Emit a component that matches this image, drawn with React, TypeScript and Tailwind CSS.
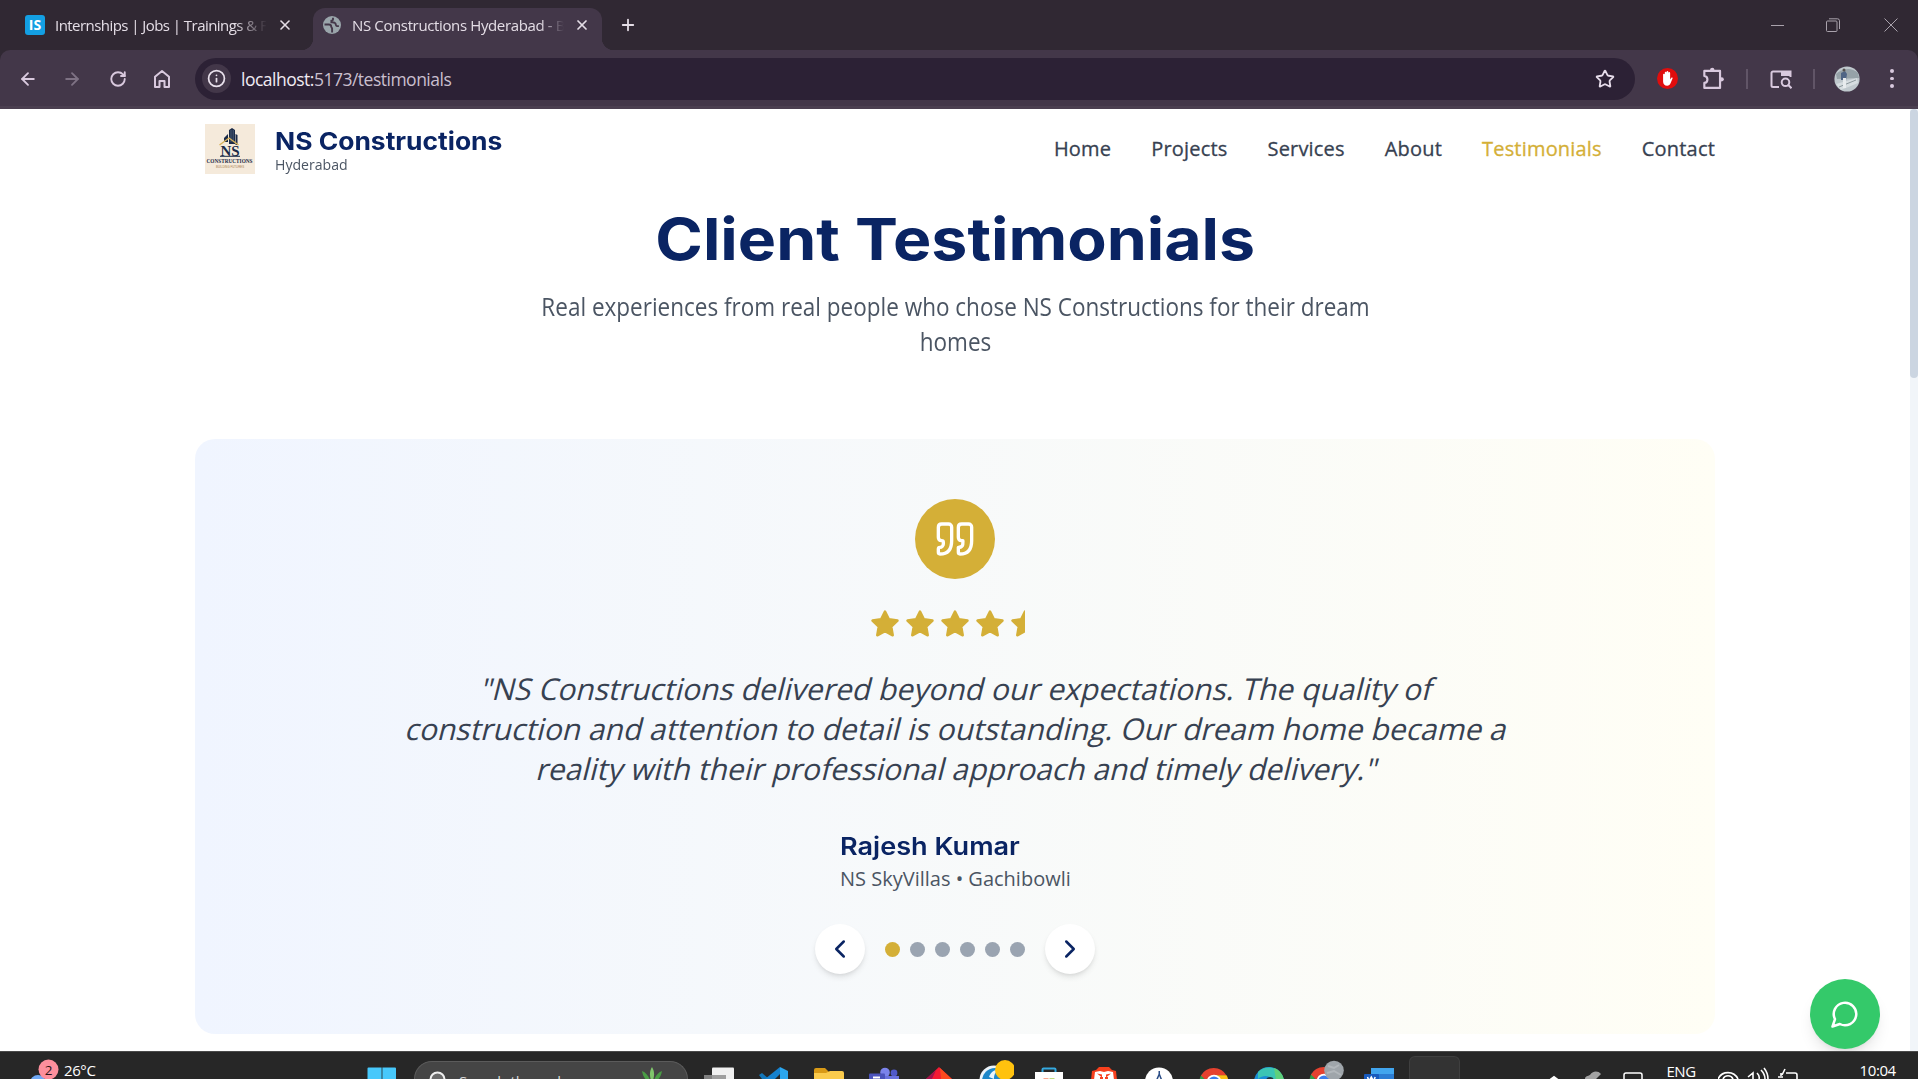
import { type ReactNode } from 'react';
import { ArrowLeft, ArrowRight, RotateCw, Info, X, Plus, Star, ChevronLeft, ChevronRight } from 'lucide-react';

const NAV = ['Home', 'Projects', 'Services', 'About', 'Testimonials', 'Contact'];

const QUOTE = [
  '"NS Constructions delivered beyond our expectations. The quality of',
  'construction and attention to detail is outstanding. Our dream home became a',
  'reality with their professional approach and timely delivery."',
];

const STAR =
  'M12 2l3.090 6.260L22 9.270l-5 4.870 1.180 6.880L12 17.770l-6.180 3.250L7 14.140 2 9.270l6.910-1.010z';

function TabStrip() {
  return (
    <div className="flex h-[50px] shrink-0 items-center bg-[#302833] text-[15px] text-[#e4dde6]">
      <div className="flex h-full w-[313px] shrink-0 items-center pl-[25px]">
        <div className="flex h-5 w-5 shrink-0 items-center justify-center rounded-[3px] bg-[#139fe3] text-[14px] font-bold leading-none text-white">
          IS
        </div>
        <div className="ml-[10px] w-[211px] overflow-hidden whitespace-nowrap [mask-image:linear-gradient(to_right,black_180px,transparent_212px)]">
          <span className="tracking-[-0.55px]">Internships | Jobs | Trainings &amp; F</span>
        </div>
        <X className="ml-[11px] h-4 w-4" strokeWidth={2.4} />
      </div>
      <div className="relative flex h-[42px] w-[289px] shrink-0 items-center self-end rounded-t-[12px] bg-[#433749] pb-2 pl-[10px]">
        <div className="absolute -left-3 bottom-0 h-3 w-3 bg-[radial-gradient(circle_at_0_0,#302833_12px,#433749_12.5px)]" />
        <div className="absolute -right-3 bottom-0 h-3 w-3 bg-[radial-gradient(circle_at_100%_0,#302833_12px,#433749_12.5px)]" />
        <svg viewBox="0 0 18 18" className="h-[18px] w-[18px] shrink-0">
          <circle cx="9" cy="9" r="9" fill="#9aa5ab" />
          <path d="M1.500 8.500h4.300c1.500 0 2.400.9 2.400 2.100 0 .9.9 1 .9 1.900v4M10 1.800v1.700c0 1-.8 1.200-1.600 1.300v1.500c1.500 0 3.400-.2 4 1 .5 1 .2 2.600 1.500 2.800h2" fill="none" stroke="#433749" strokeWidth="1.900" />
        </svg>
        <div className="ml-[11px] w-[212px] overflow-hidden whitespace-nowrap [mask-image:linear-gradient(to_right,black_188px,transparent_212px)]">
          <span className="tracking-[-0.37px]">NS Constructions Hyderabad - B</span>
        </div>
        <X className="ml-[10px] h-4 w-4" strokeWidth={2.6} />
      </div>
      <Plus className="ml-[17px] h-[18px] w-[18px]" strokeWidth={2.4} />
      <div className="ml-auto flex items-center pr-[20px] text-[#a9a2ac]">
        <div className="mr-[42px] h-px w-[13px] bg-[#a9a2ac]" />
        <svg viewBox="0 0 14 14" className="mr-[44px] h-[14px] w-[14px]" fill="none" stroke="currentColor">
          <rect x=".5" y="3" width="10.5" height="10.5" rx="1" />
          <path d="M3 .8h8.500a2 2 0 0 1 2 2V11" />
        </svg>
        <svg viewBox="0 0 14 14" className="h-[14px] w-[14px]" stroke="currentColor">
          <path d="M.5.5l13 13M13.500.5l-13 13" />
        </svg>
      </div>
    </div>
  );
}

function Toolbar() {
  return (
    <div className="bg-[#302833]">
      <div className="flex h-[59px] items-center rounded-t-[10px] border-b-[3px] border-[#4b3f50] bg-[#433749] pt-px text-[#d9c9de]">
        <div className="flex w-[195px] shrink-0 items-center gap-[24px] pl-[18px]">
          <ArrowLeft className="h-[20px] w-[20px]" strokeWidth={2.2} />
          <ArrowRight className="h-[20px] w-[20px] text-[#7e7284]" strokeWidth={2.2} />
          <RotateCw className="ml-[3px] h-[18px] w-[18px]" strokeWidth={2.5} />
          <svg viewBox="0 0 18 20" className="ml-[2px] h-[20px] w-[18px]" fill="none" stroke="currentColor" strokeWidth="2">
            <path d="M2 7.800L9 2l7 5.800V18h-4.500v-6h-5v6H2z" strokeLinejoin="round" />
          </svg>
        </div>
        <div className="flex h-[42px] w-[1440px] shrink-0 items-center rounded-full bg-[#2c2135] pl-[7px] pr-[20px]">
          <div className="flex h-[29px] w-[29px] items-center justify-center rounded-full bg-[#433749] text-[#e9e1ec]">
            <Info className="h-[19px] w-[19px]" strokeWidth={2.2} />
          </div>
          <div className="ml-[10px] pt-[2px] text-[17.5px] tracking-[-0.5px] text-[#c9bfce]">
            <span className="text-[#f1ebf3]">localhost:</span>5173/testimonials
          </div>
          <Star className="ml-auto h-[20px] w-[20px] text-[#e6dcea]" strokeWidth={2.2} strokeLinejoin="miter" />
        </div>
        <svg viewBox="0 0 20 20" className="ml-[22px] h-[21px] w-[21px]">
          <circle cx="10" cy="10" r="10" fill="#e00d0d" />
          <path d="M5.800 9.500V6.200a.8.8 0 0 1 1.600 0V4.500a.8.8 0 0 1 1.700 0V3.800a.8.8 0 0 1 1.700 0v.9a.8.8 0 0 1 1.700 0v6.200l1-1.400c.6-.8 1.700-.4 1.300.6l-1.900 4.500c-.6 1.400-1.500 2.200-3.200 2.200-2.500 0-3.900-1.400-3.900-4z" fill="#fff" />
        </svg>
        <svg viewBox="0 0 24 24" className="ml-[22px] h-[26px] w-[26px]" fill="none" stroke="currentColor" strokeWidth="2">
          <path d="M4 4.500h14.500v15.700H4v-4.600c3.800-.3 3.800-6.100 0-6.400z" strokeLinejoin="round" />
          <circle cx="11.300" cy="3.500" r="2" fill="currentColor" stroke="none" />
          <circle cx="20" cy="12.300" r="2" fill="currentColor" stroke="none" />
        </svg>
        <div className="ml-[20px] h-[20px] w-[2px] bg-[#615567]" />
        <svg viewBox="0 0 22 20" className="ml-[22px] h-[20px] w-[22px]" fill="none" stroke="currentColor" strokeWidth="2">
          <path d="M9 18H3a1.500 1.500 0 0 1-1.500-1.500V4A1.500 1.500 0 0 1 3 2.500h17.500V8" />
          <path d="M11 2h10v5H11z" fill="currentColor" stroke="none" />
          <circle cx="15.500" cy="13.300" r="3.800" />
          <path d="M18.300 16l3.200 3.200" />
        </svg>
        <div className="ml-[21px] h-[20px] w-[2px] bg-[#615567]" />
        <svg viewBox="0 0 26 26" className="ml-[19px] h-[26px] w-[26px]">
          <circle cx="13" cy="13" r="12.600" fill="#bfc8cd" />
          <path d="M2 8c5-5 15-8 22-1l1 5-22 1z" fill="#96a2a8" />
          <path d="M2 18l21-6 1 5-17 7z" fill="#d6dde0" />
          <path d="M5 21l17-7" stroke="#8b979c" />
          <path d="M7 7l4-2 2 3-1 6H7z" fill="#4f6585" />
          <path d="M9 12h3v10H9z" fill="#e8ecee" />
          <circle cx="10" cy="4" r="1.500" fill="#54504c" />
        </svg>
        <div className="ml-[30px] flex flex-col gap-[4px]">
          <div className="h-[3.5px] w-[3.5px] rounded-full bg-current" />
          <div className="h-[3.5px] w-[3.5px] rounded-full bg-current" />
          <div className="h-[3.5px] w-[3.5px] rounded-full bg-current" />
        </div>
      </div>
    </div>
  );
}

function Logo() {
  return (
    <svg viewBox="0 0 50 50" className="h-[50px] w-[50px]">
      <rect width="50" height="50" fill="#f5eadb" />
      <path d="M19 14l4-4v8h-4zM24 6l3-2 3 2v14h-6zM30.500 10l2 1v10h-2z" fill="#1b2b48" />
      <path d="M26 6v12M28.200 6v12" stroke="#6e7f99" strokeWidth=".6" />
      <path d="M14.500 21l9.500-7 9.500 7" fill="none" stroke="#d8b25a" strokeWidth="1.400" />
      <text x="25" y="31.500" textAnchor="middle" fontFamily="Liberation Serif" fontWeight="700" fontSize="15" fill="#1b2b48">NS</text>
      <path d="M15 32.300h20" stroke="#1b2b48" strokeWidth="1" />
      <text x="24.500" y="39.300" textAnchor="middle" fontFamily="Liberation Serif" fontWeight="700" fontSize="6" textLength="46" lengthAdjust="spacingAndGlyphs" fill="#1b2b48">CONSTRUCTIONS</text>
      <text x="25" y="43.500" textAnchor="middle" fontFamily="Liberation Sans" fontSize="2.800" textLength="28" fill="#a4794a">BUILDING FUTURES</text>
    </svg>
  );
}

function Page() {
  return (
    <div className="flex h-[942px] shrink-0 overflow-hidden bg-white">
      <div className="relative flex w-[1910px] shrink-0 flex-col px-[195px]">
        <header className="flex h-[80px] items-center justify-between pl-[10px]">
          <div className="flex items-center gap-[20px]">
            <Logo />
            <div className="pt-[3px]">
              <div className="font-['Inter'] text-[24.5px] font-bold leading-[28px] text-[#0a2463]">
                <span className="inline-block origin-left scale-x-[1.078]">NS Constructions</span>
              </div>
              <div className="-mt-px origin-left scale-x-[0.94] text-[15px] leading-[20px] text-[#4b5563]">Hyderabad</div>
            </div>
          </div>
          <nav className="flex gap-[40px] text-[20px] tracking-[0.19px] text-[#374151] [-webkit-text-stroke:0.3px_currentColor]">
            {NAV.map((n) => (
              <a key={n} className={n === 'Testimonials' ? 'text-[#d4af37]' : ''}>{n}</a>
            ))}
          </nav>
        </header>
        <section className="flex flex-col items-center pt-[20px] text-center">
          <h1 className="scale-x-[1.11] font-['Inter'] text-[58px] font-bold leading-[60px] text-[#0a2463]">Client Testimonials</h1>
          <p className="mt-[20px] w-[933px] scale-x-[0.9] text-[25px] leading-[35px] text-[#4b5563]">
            Real experiences from real people who chose NS Constructions for their dream homes
          </p>
        </section>
        <section className="mt-[80px] flex h-[595px] shrink-0 flex-col items-center rounded-[20px] bg-linear-to-r from-[#f0f5ff] to-[#fffef5] pt-[60px]">
          <div className="flex h-[80px] w-[80px] items-center justify-center rounded-full bg-[#d4af37]">
            <svg viewBox="0 0 24 24" className="h-[40px] w-[40px] text-white" fill="none" stroke="currentColor" strokeWidth="2" strokeLinecap="round" strokeLinejoin="round">
              <path d="M3 21c3 0 7-1 7-8V5c0-1.250-.756-2.017-2-2H4c-1.250 0-2 .75-2 1.972V11c0 1.250.75 2 2 2 1 0 1 0 1 1v1c0 1-1 2-2 2s-1 .008-1 1.031V20c0 1 0 1 1 1z" />
              <path d="M15 21c3 0 7-1 7-8V5c0-1.250-.757-2.017-2-2h-4c-1.250 0-2 .75-2 1.972V11c0 1.250.75 2 2 2h.75c0 2.250.25 4-2.750 4v3c0 1 0 1 1 1z" />
            </svg>
          </div>
          <div className="mt-[30px] flex gap-[5px]">
            {[24, 24, 24, 24, 12].map((w, i) => (
              <svg key={i} viewBox="0 0 24 24" className="h-[30px] w-[30px] text-[#d4af37]">
                <svg width={w} height="24" viewBox={`0 0 ${w} 24`}>
                  <path d={STAR} fill="currentColor" stroke="currentColor" strokeWidth="2" strokeLinejoin="round" />
                </svg>
              </svg>
            ))}
          </div>
          <blockquote className="mt-[30px] flex flex-col items-center whitespace-nowrap text-[30px] leading-[40px] text-[#374151]">
            {QUOTE.map((line) => (
              <span key={line} className="origin-[50%_78%] -skew-x-[14deg]">{line}</span>
            ))}
          </blockquote>
          <div className="mt-[40px] w-[230px] whitespace-nowrap">
            <div className="font-['Inter'] text-[24.5px] font-semibold leading-[35px] text-[#0a2463]">
              <span className="inline-block origin-left scale-x-[1.105]">Rajesh Kumar</span>
            </div>
            <div className="text-[20px] leading-[30px] text-[#4b5563]">NS SkyVillas • Gachibowli</div>
          </div>
          <div className="mt-[30px] flex items-center gap-[20px] text-[#0a2463]">
            <button className="flex h-[50px] w-[50px] items-center justify-center rounded-full bg-white shadow-md">
              <ChevronLeft className="h-[30px] w-[30px]" />
            </button>
            <div className="flex gap-[10px]">
              {[0, 1, 2, 3, 4, 5].map((i) => (
                <div key={i} className={i === 0 ? 'h-[15px] w-[15px] rounded-full bg-[#d4af37]' : 'h-[15px] w-[15px] rounded-full bg-[#9aa4b1]'} />
              ))}
            </div>
            <button className="flex h-[50px] w-[50px] items-center justify-center rounded-full bg-white shadow-md">
              <ChevronRight className="h-[30px] w-[30px]" />
            </button>
          </div>
        </section>
        <div className="absolute bottom-[2px] right-[30px] flex h-[70px] w-[70px] items-center justify-center rounded-full bg-[#34c96a] text-white shadow-lg">
          <svg viewBox="0 0 24 24" className="h-[30px] w-[30px]" fill="none" stroke="currentColor" strokeWidth="2" strokeLinecap="round" strokeLinejoin="round">
            <path d="M7.900 20A9 9 0 1 0 4 16.100L2 22Z" />
          </svg>
        </div>
      </div>
      <div className="w-2 bg-[#f1f5f9]">
        <div className="h-[269px] rounded-full bg-[#cbd5e1]" />
      </div>
    </div>
  );
}

function Slot({ children }: { children?: ReactNode }) {
  return (
    <div className="flex h-[12px] w-[55px] shrink-0 items-start justify-center overflow-hidden">{children}</div>
  );
}

function Chrome({ avatar }: { avatar?: boolean }) {
  return (
    <svg viewBox="0 0 40 19" className="h-[19px] w-[40px]">
      <path d="M5.500 21a14.500 14.500 0 0 1 2-7.500L15 24z" fill="#2f9e4b" />
      <path d="M7 14.500a14.500 14.500 0 0 1 25.500 0H20l-7 6z" fill="#e5412f" />
      <path d="M20 14.300h12.500a14 14 0 0 1 2 6H25z" fill="#fbc116" />
      <circle cx="20" cy="21" r="7.300" fill="#fff" />
      <circle cx="20" cy="21" r="5.600" fill="#3b7ded" />
      {avatar && (
        <g>
          <circle cx="30" cy="10.500" r="9.800" fill="#9fa5aa" />
          <path d="M24 6l6 2 5-3M23 13l7-2 7 4" stroke="#b2b7bb" strokeWidth="2" fill="none" />
        </g>
      )}
    </svg>
  );
}

function Taskbar() {
  return (
    <div className="flex h-[28px] shrink-0 items-end overflow-hidden border-t border-[#4a4a4a] bg-[#272727] text-[15px] text-white">
      <div className="flex w-[354px] shrink-0 items-end">
        <svg viewBox="0 0 64 27" className="h-[27px] w-[64px]">
          <circle cx="38" cy="31" r="8" fill="#6fa8f5" />
          <circle cx="48.500" cy="17.500" r="10" fill="#fd8f9c" />
          <text x="48.500" y="22.500" textAnchor="middle" fontFamily="Open Sans" fontSize="13.500" fill="#2a1416">2</text>
        </svg>
        <span className="h-[19px] leading-[20px] tracking-[-0.4px]">26°C</span>
      </div>
      <Slot>
        <svg viewBox="0 0 30 12" className="h-[12px] w-[30px]">
          <path d="M.5 1.500a1 1 0 0 1 1-1H14.600V12H.5zM15.400.5H28a1 1 0 0 1 1 1V12H15.400z" fill="#47c8fb" />
        </svg>
      </Slot>
      <div className="ml-[5px] mr-[3.5px] flex h-[18px] w-[274px] shrink-0 items-start overflow-hidden rounded-t-[18px] border border-b-0 border-[#5b5b5b] bg-[#454545] pl-[14px] pt-[9px]">
        <svg viewBox="0 0 18 18" className="h-[18px] w-[18px] shrink-0" fill="#6a6a6a" stroke="#eee" strokeWidth="2">
          <circle cx="8.500" cy="8.500" r="7" />
        </svg>
        <span className="ml-[12px] whitespace-nowrap leading-[20px] text-[#d5d5d5]">Search the web</span>
        <svg viewBox="0 0 26 16" className="-mt-[4px] ml-auto mr-[22px] h-[16px] w-[26px] shrink-0">
          <path d="M13 0c3 5 2.500 10 0 16-2.500-6-3-11 0-16z" fill="#7fc66b" />
          <path d="M3 4c5 2 7 6 9 12C7 14 4 10 3 4zM23 4c-5 2-7 6-9 12 5-2 8-6 9-12z" fill="#4a9c45" />
          <path d="M0 14c5-2 9-1 12 3zM26 14c-5-2-9-1-12 3z" fill="#3a8a3a" />
        </svg>
      </div>
      <Slot>
        <svg viewBox="0 0 30 12" className="h-[12px] w-[30px]">
          <rect x="8" y=".5" width="22" height="16" rx="1" fill="#f0f0f0" />
          <path d="M0 8h22v8H0z" fill="#8f8f8f" opacity=".85" />
        </svg>
      </Slot>
      <Slot>
        <svg viewBox="0 0 30 12" className="h-[12px] w-[30px]">
          <path d="M0 8l3-2 7 6H3z" fill="#1376b9" />
          <path d="M6 12L21 0v12z" fill="#1682cf" />
          <path d="M21 0l8 4v10h-8z" fill="#2ba6ee" />
          <path d="M16 12l5-5v5z" fill="#272727" />
        </svg>
      </Slot>
      <Slot>
        <svg viewBox="0 0 30 12" className="h-[12px] w-[30px]">
          <path d="M0 3a2 2 0 0 1 2-2h9l4 4v7H0z" fill="#d99a16" />
          <path d="M0 6h12l4-2h12a2 2 0 0 1 2 2v6H0z" fill="#fbcb4c" />
        </svg>
      </Slot>
      <Slot>
        <svg viewBox="0 0 30 12" className="h-[12px] w-[30px]">
          <circle cx="16" cy="5.500" r="4.800" fill="#7b83eb" />
          <circle cx="25" cy="6" r="3.400" fill="#5059c9" />
          <path d="M9 9h21v3H9z" fill="#6a72dd" />
          <rect x="0" y="6.500" width="16" height="9" rx="1" fill="#4b53bc" />
          <path d="M4 10.500h7" stroke="#fff" strokeWidth="2" />
        </svg>
      </Slot>
      <Slot>
        <svg viewBox="0 0 30 12" className="h-[12px] w-[30px]">
          <path d="M15 0l14 13H1z" fill="#f41a33" />
          <path d="M16 1l13 12H17z" fill="#fd4a1e" />
          <path d="M12 3L2 12h6z" fill="#a3124f" />
        </svg>
      </Slot>
      <div className="flex h-[20px] w-[55px] shrink-0 items-start justify-center overflow-hidden">
        <svg viewBox="0 0 40 20" className="h-[20px] w-[40px]">
          <circle cx="20" cy="21" r="14.500" fill="#eef5fa" />
          <circle cx="21" cy="22" r="13" fill="#1d87c9" />
          <path d="M15 18c2-6 7-8 10-7-4 2-5 5-5 9z" fill="#e7f4fb" />
          <circle cx="31" cy="11" r="10" fill="#ffc20e" />
        </svg>
      </div>
      <Slot>
        <svg viewBox="0 0 30 12" className="h-[12px] w-[30px]">
          <path d="M8.500 6V2.500a1 1 0 0 1 1-1h11a1 1 0 0 1 1 1V6" fill="none" stroke="#35a9e0" strokeWidth="2" />
          <path d="M1 5h28v8H1z" fill="#fff" />
          <path d="M9.500 11.500h5v2h-5z" fill="#f25022" />
          <path d="M15.500 11.500h5v2h-5z" fill="#7fba00" />
        </svg>
      </Slot>
      <Slot>
        <svg viewBox="0 0 30 12" className="h-[12px] w-[30px]">
          <path d="M3 4l4-1 3-3h10l3 3 4 1 1 9H2z" fill="#f8401d" />
          <path d="M6 5l5-1 4 1 4-1 5 1 1 8H5z" fill="#fff" />
          <path d="M8 6.500l5 1v3zM22 6.500l-5 1v3z" fill="#f8401d" />
          <path d="M11 10h3v2h-3zM16 10h3v2h-3z" fill="#f8401d" />
        </svg>
      </Slot>
      <Slot>
        <svg viewBox="0 0 30 12" className="h-[12px] w-[30px]">
          <circle cx="15" cy="14.500" r="14" fill="#fff" />
          <path d="M14.500 4h1.500v3l2 5h-1.600l-1.200-3-1.200 3H12.300l2.200-5z" fill="#2b4d86" />
        </svg>
      </Slot>
      <Slot>
        <div className="-mt-[6px]"><Chrome /></div>
      </Slot>
      <Slot>
        <svg viewBox="0 0 30 12" className="h-[12px] w-[30px]">
          <circle cx="15" cy="15" r="15" fill="#1b8ed6" />
          <path d="M4 5C11-3 27-1 30 14H18c0-5-8-7-14-2z" fill="#3bc5b4" />
          <path d="M20 1c6 2 9 7 10 12h-8z" fill="#5fd07a" />
          <circle cx="16" cy="14" r="4" fill="#20303c" />
        </svg>
      </Slot>
      <div className="flex h-[19px] w-[55px] shrink-0 items-start justify-center overflow-hidden"><Chrome avatar /></div>
      <Slot>
        <svg viewBox="0 0 30 12" className="h-[12px] w-[30px]">
          <path d="M7 1h23v6H7z" fill="#41a5ee" />
          <path d="M7 7h23v6H7z" fill="#2b7cd3" />
          <rect x="0" y="7" width="15" height="9" rx="1" fill="#185abd" />
          <path d="M3.500 10l1.500 4 2.300-4 2.300 4 1.600-4" stroke="#fff" strokeWidth="1.500" fill="none" />
        </svg>
      </Slot>
      <div className="ml-[2px] h-[23px] w-[51px] shrink-0 rounded-t-[6px] border border-b-0 border-[#3f3f3f] bg-[#333]" />
      <svg viewBox="0 0 110 12" className="ml-[85px] h-[12px] w-[110px] shrink-0" fill="none" stroke="#fff" strokeWidth="1.500">
        <path d="M5 13l4-3 4 3" strokeWidth="2" />
        <path d="M40 12c0-3 3-3 5-4 2-4 8-5 11-1l-5 5z" fill="#a3a3a3" stroke="none" />
        <rect x="79" y="6" width="18" height="12" rx="2" />
      </svg>
      <span className="ml-[12px] h-[18px] leading-[20px] tracking-[-0.5px]">ENG</span>
      <svg viewBox="0 0 90 14" className="ml-[22px] h-[14px] w-[90px] shrink-0" fill="none" stroke="#fff" strokeWidth="1.600">
        <path d="M0 14a11 11 0 0 1 20 0M5 14a5.500 5.500 0 0 1 10 0" />
        <path d="M30 12l5-4v6M39 8q3 3 2 6M43 5q4 4 4 9M46 3q4 5 4 11" />
        <path d="M68 8h9a2 2 0 0 1 2 2v4M60 12h5M63 8v3M67 4l-3 6" />
      </svg>
      <span className="ml-[52px] h-[19px] leading-[20px] tracking-[-0.4px]">10:04</span>
    </div>
  );
}

export default function App() {
  return (
    <div className="flex h-[1079px] w-[1918px] flex-col overflow-hidden font-['Open_Sans',sans-serif]">
      <TabStrip />
      <Toolbar />
      <Page />
      <Taskbar />
    </div>
  );
}
